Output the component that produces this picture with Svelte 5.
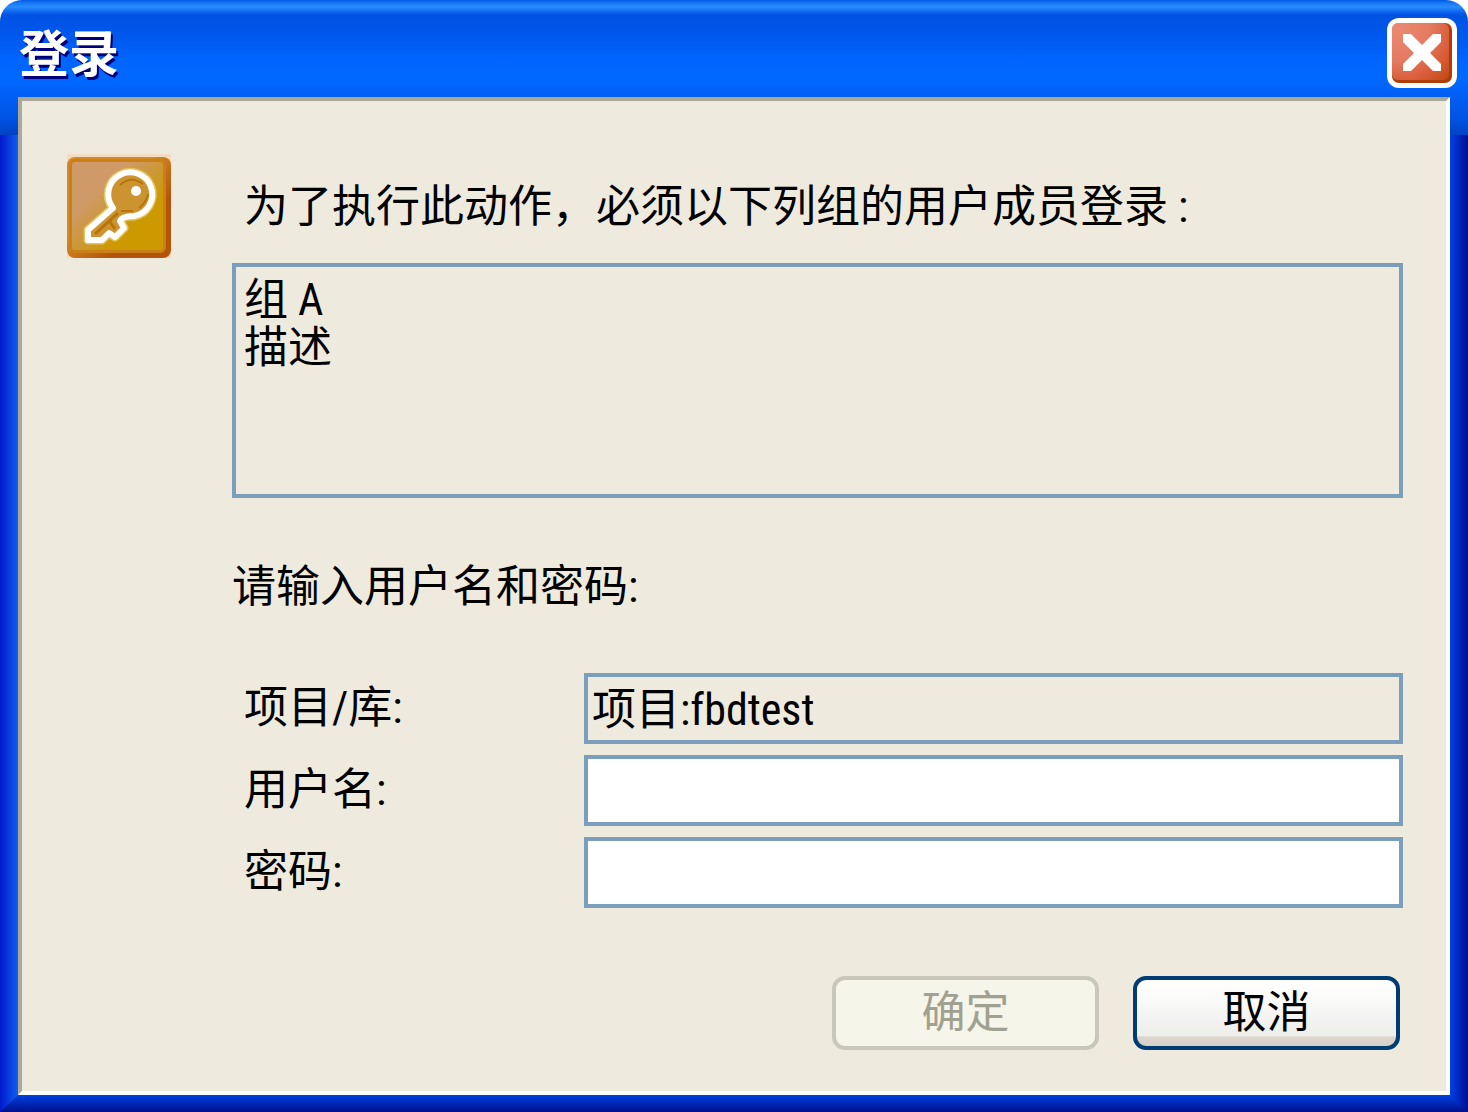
<script lang="ts">
  const groups = "组 A\n描述";
  const project = "项目:fbdtest";

  let username = $state("");
  let password = $state("");
</script>

<main class="dialog" lang="zh-CN">
  <header class="title-bar">
    <h1>登录</h1>
    <button type="button" class="close" aria-label="关闭">
      <svg viewBox="0 0 70 70" aria-hidden="true">
        <defs>
          <radialGradient id="close-fill" cx="0.1" cy="0.1" r="1.25">
            <stop offset="0" stop-color="#ea8a72" />
            <stop offset="0.45" stop-color="#e47a60" />
            <stop offset="0.75" stop-color="#d95c38" />
            <stop offset="1" stop-color="#bf4a12" />
          </radialGradient>
        </defs>
        <rect width="70" height="70" rx="12" fill="#fff" />
        <rect x="5" y="5" width="60" height="60" rx="7" fill="#b03c0a" />
        <rect x="5" y="5" width="57" height="57" rx="6" fill="url(#close-fill)" />
        <path
          d="M16 16H24L35 27L46 16H54V24L43 35L54 46V53H46L35 42L24 53H16V46L27 35L16 24Z"
          fill="#fff"
        />
      </svg>
    </button>
  </header>

  <form class="panel">
    <svg class="key" viewBox="0 0 104 104" aria-hidden="true">
      <defs>
        <linearGradient id="key-fill" x1="0" y1="0" x2="1" y2="1">
          <stop offset="0.3" stop-color="#d09a68" />
          <stop offset="0.5" stop-color="#cc9838" />
          <stop offset="0.7" stop-color="#cc9900" />
        </linearGradient>
        <linearGradient id="key-edge" x1="0" y1="0" x2="1" y2="1">
          <stop offset="0.4" stop-color="#d48a28" />
          <stop offset="0.7" stop-color="#b45408" />
        </linearGradient>
      </defs>
      <rect width="104" height="104" fill="#f4dcc0" />
      <rect y="3" width="104" height="101" rx="8" fill="url(#key-edge)" />
      <rect x="2" y="5" width="97" height="94" rx="6" fill="#c98018" />
      <rect x="5" y="8" width="91" height="88" rx="3" fill="url(#key-fill)" />
      <path
        d="M46 54A22 22 0 1 1 67 62Q55 62 53 67L57 74L48 83L42 79L35 86H21V76Z"
        fill="none"
        stroke="#e4c45c"
        stroke-width="9"
        stroke-linejoin="round"
      />
      <path
        d="M46 54A22 22 0 1 1 67 62Q55 62 53 67L57 74L48 83L42 79L35 86H21V76Z"
        fill="#cc9430"
        stroke="#fff"
        stroke-width="6"
        stroke-linejoin="round"
      />
      <path d="M51 59L28 80M43 68L48 75" stroke="#b87408" stroke-width="3" fill="none" />
      <path d="M53 31Q64 21 76 30M81 40Q79 49 72 54M66 57H54" stroke="#b87408" stroke-width="2" fill="none" />
      <circle cx="69" cy="37" r="5" fill="#fff" />
    </svg>

    <div class="content">
      <label class="message" for="groups">为了执行此动作，必须以下列组的用户成员登录 :</label>
      <textarea id="groups" class="groups" readonly value={groups}></textarea>

      <p class="prompt">请输入用户名和密码:</p>

      <div class="fields">
        <label for="project">项目/库:</label>
        <input id="project" type="text" readonly value={project} />
        <label for="username">用户名:</label>
        <input id="username" type="text" bind:value={username} />
        <label for="password">密码:</label>
        <input id="password" type="password" bind:value={password} />
      </div>

      <div class="actions">
        <button type="submit" class="btn" disabled>确定</button>
        <button type="button" class="btn">取消</button>
      </div>
    </div>
  </form>

  <div class="bottom-edge"></div>
</main>

<style>
  :global(body) {
    background: #fff;
  }

  .dialog {
    box-sizing: border-box;
    min-height: 100vh;
    display: flex;
    flex-direction: column;
    border-radius: 22px 22px 0 0;
    overflow: hidden;
    font-family: "Liberation Sans Narrow", "Roboto Condensed", "Liberation Sans", "Noto Sans CJK SC", sans-serif;
    font-size: 44px;
    line-height: 48px;
    color: #000;
    background:
      linear-gradient(
        #0058e6 0,
        #1878f4 3px,
        #288cff 7px,
        #0c66ee 12px,
        #0052e2 15px,
        #0058ee 36px,
        #0066ff 62px,
        #0068ff 80px,
        #005cf2 100px,
        #0054e4 118px,
        #0042c4 135px
      ) top / 100% 135px no-repeat,
      linear-gradient(to right, #0018cc, #1060f0) left / 18px 100% no-repeat,
      linear-gradient(to left, #00108c, #0040e8) right / 18px 100% no-repeat;
  }

  .title-bar {
    display: flex;
    align-items: center;
    justify-content: space-between;
    height: 97px;
    padding: 8px 11px 0 19px;
    box-sizing: border-box;
  }

  h1 {
    margin: 0;
    padding-top: 4px;
    font-size: 50px;
    font-weight: 700;
    color: #fff;
    text-shadow: 2px 3px 0 #00007a;
  }

  button {
    font: inherit;
    cursor: pointer;
  }

  .close {
    width: 70px;
    height: 70px;
    padding: 0;
    border: none;
    background: none;
  }

  .close svg {
    display: block;
  }

  .panel {
    flex: 1;
    display: flex;
    align-items: flex-start;
    gap: 61px;
    margin: 0 18px;
    padding: 53px 43px 40px 45px;
    border: 4px solid;
    border-color: #aca899 #fff #fff #aca899;
    background: #eeeade;
  }

  .key {
    flex: none;
    width: 104px;
    height: 104px;
  }

  .content {
    flex: 1;
    min-width: 0;
    display: flex;
    flex-direction: column;
    padding-top: 29px;
  }

  .message {
    padding-left: 12px;
  }

  .groups {
    box-sizing: border-box;
    height: 235px;
    margin-top: 32px;
    padding: 9px 8px;
    resize: none;
  }

  .groups,
  input {
    border: 4px solid #7b9ebd;
    border-radius: 0;
    outline: none;
    font: inherit;
    color: #000;
    background: #fff;
  }

  .groups,
  input[readonly] {
    background: #eeeade;
  }

  .prompt {
    margin: 65px 0 62px;
  }

  .fields {
    display: grid;
    grid-template-columns: 352px 1fr;
    align-items: center;
    row-gap: 11px;
  }

  .fields label {
    padding: 0 0 2px 12px;
  }

  input {
    box-sizing: border-box;
    width: 100%;
    height: 71px;
    padding: 0 4px 6px;
  }

  .actions {
    display: flex;
    justify-content: flex-end;
    gap: 34px;
    margin-top: 68px;
    padding-right: 3px;
  }

  .btn {
    box-sizing: border-box;
    width: 267px;
    height: 74px;
    padding: 0;
    border: 4px solid #003c74;
    border-radius: 13px;
    color: #000;
    background: linear-gradient(#fff, #fafaf8 30%, #f2f2f2 60%, #eeeeea 85%, #dcd6cc 86%, #d8d0c8);
  }

  .btn:disabled {
    border-color: #c9c7ba;
    color: #a1a192;
    background: #f5f5e9;
    cursor: default;
  }

  /* mitred against the side borders */
  .bottom-edge {
    height: 17px;
    background: linear-gradient(#0040e0, #00108c);
    clip-path: polygon(18px 0, calc(100% - 18px) 0, 100% 100%, 0 100%);
  }
</style>
